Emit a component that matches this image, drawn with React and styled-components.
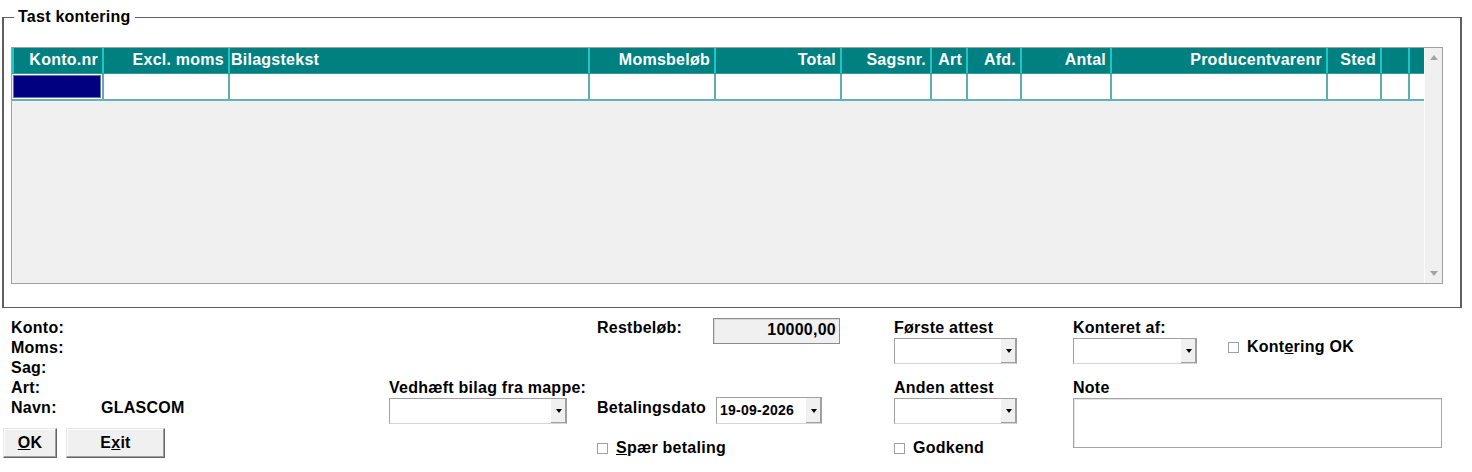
import React from 'react';
import styled, { createGlobalStyle } from 'styled-components';

const GlobalStyle = createGlobalStyle`
  *, *::before, *::after { box-sizing: border-box; }
  html, body { margin: 0; padding: 0; background: #fff; }
  body {
    font-family: "Liberation Sans", Arial, sans-serif;
    font-size: 16px;
    font-weight: bold;
    letter-spacing: 0.25px;
    color: #000;
  }
`;

const Page = styled.div`
  width: 1472px;
  height: 472px;
  overflow: hidden;
  padding-top: 17px;
`;

const Frame = styled.section`
  position: relative;
  margin-left: 2px;
  width: 1460px;
  height: 291px;
  border-style: solid;
  border-color: #5f5f5f;
  border-width: 1px 2px 1px 2px;
  padding: 29px 0 0 7px;
`;

const FrameTitle = styled.span`
  position: absolute;
  top: -10px;
  left: 10px;
  padding: 0 4px;
  background: #fff;
  line-height: 18px;
  white-space: nowrap;
`;

const GridBox = styled.div`
  display: flex;
  width: 1432px;
  height: 237px;
  border: 1px solid #a0a0a0;
  background: #f0f0f0;
`;

const Table = styled.div`
  display: flex;
  flex-direction: column;
  width: 1412px;
`;

const HeaderRow = styled.div`
  display: flex;
  height: 26px;
  background: #008080;
  border-bottom: 1px solid #2a9d9d;
`;

const HeaderCell = styled.div`
  width: ${p => p.$w}px;
  flex: none;
  border-left: 2px solid #1fc4c4;
  color: #fff;
  line-height: 23px;
  white-space: nowrap;
  overflow: hidden;
  text-align: ${p => (p.$left ? 'left' : 'right')};
  padding: ${p => (p.$left ? '0 0 0 1px' : '0 4px 0 0')};
`;

const DataRow = styled.div`
  display: flex;
  height: 27px;
  background: #fff;
  border-bottom: 2px solid #66b2b2;
`;

const DataCell = styled.div`
  width: ${p => p.$w}px;
  flex: none;
  border-left: ${p => (p.$first ? '1px solid #e8e8e8' : '2px solid #5eaeae')};
  padding: ${p => (p.$first ? '1px 1px 1px 0' : '0')};
`;

const SelectedCell = styled.div`
  width: 100%;
  height: 100%;
  background: #000080;
  border: 1px solid #6f6fa8;
`;

const Scrollbar = styled.div`
  width: 18px;
  display: flex;
  flex-direction: column;
  align-items: center;
  justify-content: space-between;
  padding: 7px 0;
  border-left: 1px solid #fbfbfb;
  background: #f0f0f0;
`;

const Arrow = styled.span`
  width: 0;
  height: 0;
  border-left: 4px solid transparent;
  border-right: 4px solid transparent;
  ${p => (p.$down ? 'border-top: 5px solid #a3a3a3;' : 'border-bottom: 5px solid #a3a3a3;')}
`;

const Bottom = styled.div`
  display: flex;
  padding-top: 10px;
  margin-left: 3px;
`;

const Column = styled.div`
  display: flex;
  flex-direction: column;
  align-items: flex-start;
  width: ${p => p.$w}px;
  flex: none;
  padding-top: ${p => p.$pt || 0}px;
`;

const InfoList = styled.div`
  display: flex;
  flex-direction: column;
  padding-left: 8px;
`;

const InfoRow = styled.div`
  display: flex;
  line-height: 20px;
  height: 20px;
`;

const InfoLabel = styled.span`
  width: 90px;
`;

const ButtonRow = styled.div`
  display: flex;
  gap: 9px;
  margin-top: 10px;
`;

const Button = styled.button`
  width: ${p => p.$w}px;
  height: 30px;
  padding: 0;
  font: inherit;
  font-weight: bold;
  letter-spacing: 0.25px;
  color: #000;
  background: #f0f0f0;
  border: 1px solid;
  border-color: #e6e6e6 #646464 #646464 #e6e6e6;
  box-shadow: inset -1px -1px 0 #a0a0a0, inset 1px 1px 0 #fff;
`;

const Label = styled.div`
  line-height: 20px;
  height: 20px;
  white-space: nowrap;
  margin-top: ${p => p.$mt || 0}px;
`;

const Combo = styled.div`
  display: flex;
  width: ${p => p.$w}px;
  height: ${p => p.$h || 26}px;
  background: #fff;
  border: 1px solid;
  border-color: #a0a0a0 #a0a0a0 #d4d4d4 #a0a0a0;
`;

const ComboText = styled.span`
  flex: 1;
  font-size: 14px;
  line-height: 24px;
  padding-left: 3px;
  white-space: nowrap;
`;

const DropButton = styled.span`
  width: 16px;
  flex: none;
  display: flex;
  align-items: center;
  justify-content: center;
  background: #f0f0f0;
  border-left: 1px solid #fff;
  box-shadow: inset -1px -1px 0 #a0a0a0;
  &::after {
    content: '';
    width: 0;
    height: 0;
    border-left: 3.5px solid transparent;
    border-right: 3.5px solid transparent;
    border-top: 4px solid #000;
  }
`;

const FieldRow = styled.div`
  display: flex;
  align-items: flex-start;
  margin-top: ${p => p.$mt || 0}px;
`;

const FieldLabel = styled.span`
  width: ${p => p.$w}px;
  line-height: 20px;
  margin-top: ${p => p.$mt || 0}px;
  white-space: nowrap;
`;

const AmountBox = styled.div`
  width: 127px;
  height: 26px;
  background: #f0f0f0;
  border: 1px solid #8c8c8c;
  box-shadow: inset 1px 1px 0 #d8d8d8;
  text-align: right;
  padding-right: 3px;
  line-height: 22px;
`;

const Check = styled.div`
  display: flex;
  align-items: center;
  height: 20px;
  line-height: 20px;
  white-space: nowrap;
  margin-top: ${p => p.$mt || 0}px;
`;

const CheckBox = styled.span`
  width: 11px;
  height: 11px;
  flex: none;
  background: #fff;
  border: 1px solid #a0a0a0;
  margin-right: 8px;
`;

const Key = styled.u`
  text-decoration: underline;
`;

const Note = styled.div`
  width: 369px;
  height: 50px;
  background: #fff;
  border: 1px solid #a5a5a5;
  box-shadow: inset 1px 1px 0 #e4e4e4;
`;

const columns = [
  { t: 'Konto.nr', w: 90 },
  { t: 'Excl. moms', w: 126 },
  { t: 'Bilagstekst', w: 360, left: true },
  { t: 'Momsbeløb', w: 126 },
  { t: 'Total', w: 126 },
  { t: 'Sagsnr.', w: 90 },
  { t: 'Art', w: 36 },
  { t: 'Afd.', w: 54 },
  { t: 'Antal', w: 90 },
  { t: 'Producentvarenr', w: 216 },
  { t: 'Sted', w: 54 },
  { t: '', w: 28 },
  { t: '', w: 16 },
];

const info = [
  ['Konto:', ''],
  ['Moms:', ''],
  ['Sag:', ''],
  ['Art:', ''],
  ['Navn:', 'GLASCOM'],
];

export default function App() {
  return (
    <Page>
      <GlobalStyle />
      <Frame>
        <FrameTitle>Tast kontering</FrameTitle>
        <GridBox>
          <Table>
            <HeaderRow>
              {columns.map((c, i) => (
                <HeaderCell key={i} $w={c.w} $left={c.left}>{c.t}</HeaderCell>
              ))}
            </HeaderRow>
            <DataRow>
              {columns.map((c, i) => (
                <DataCell key={i} $w={c.w} $first={i === 0}>
                  {i === 0 && <SelectedCell />}
                </DataCell>
              ))}
            </DataRow>
          </Table>
          <Scrollbar>
            <Arrow />
            <Arrow $down />
          </Scrollbar>
        </GridBox>
      </Frame>

      <Bottom>
        <Column $w={386}>
          <InfoList>
            {info.map(([l, v]) => (
              <InfoRow key={l}>
                <InfoLabel>{l}</InfoLabel>
                <span>{v}</span>
              </InfoRow>
            ))}
          </InfoList>
          <ButtonRow>
            <Button $w={54}><Key>O</Key>K</Button>
            <Button $w={99}>E<Key>x</Key>it</Button>
          </ButtonRow>
        </Column>

        <Column $w={208} $pt={60}>
          <Label>Vedhæft bilag fra mappe:</Label>
          <Combo $w={178}>
            <ComboText />
            <DropButton />
          </Combo>
        </Column>

        <Column $w={297}>
          <FieldRow>
            <FieldLabel $w={116}>Restbeløb:</FieldLabel>
            <AmountBox>10000,00</AmountBox>
          </FieldRow>
          <FieldRow $mt={53}>
            <FieldLabel $w={119} $mt={1}>Betalingsdato</FieldLabel>
            <Combo $w={106} $h={27}>
              <ComboText>19-09-2026</ComboText>
              <DropButton />
            </Combo>
          </FieldRow>
          <Check $mt={14}>
            <CheckBox />
            <span><Key>S</Key>pær betaling</span>
          </Check>
        </Column>

        <Column $w={179}>
          <Label>Første attest</Label>
          <Combo $w={123}>
            <ComboText />
            <DropButton />
          </Combo>
          <Label $mt={14}>Anden attest</Label>
          <Combo $w={123}>
            <ComboText />
            <DropButton />
          </Combo>
          <Check $mt={14}>
            <CheckBox />
            <span>Godkend</span>
          </Check>
        </Column>

        <Column $w={369}>
          <FieldRow>
            <Column $w={155}>
              <Label>Konteret af:</Label>
              <Combo $w={124}>
                <ComboText />
                <DropButton />
              </Combo>
            </Column>
            <Check $mt={19}>
              <CheckBox />
              <span>Kont<Key>e</Key>ring OK</span>
            </Check>
          </FieldRow>
          <Label $mt={14}>Note</Label>
          <Note />
        </Column>
      </Bottom>
    </Page>
  );
}
